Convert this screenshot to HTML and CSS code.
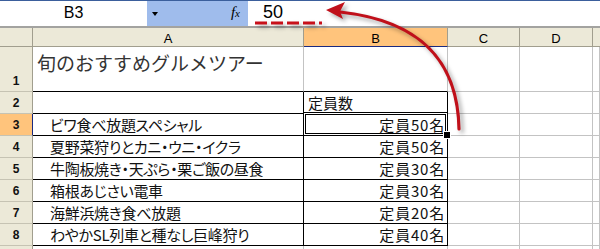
FILE: index.html
```html
<!DOCTYPE html>
<html lang="ja">
<head>
<meta charset="utf-8">
<link rel="stylesheet" href="styles.css">
</head>
<body>
<div class="app">
  <div class="fbar">
    <div class="namebox">B3</div>
    <div class="nbdrop"><span class="tri"></span><span class="fx"><i>f</i><span class="fxx">x</span></span></div>
    <div class="formula"><span class="fval">50</span></div>
  </div>
  <div class="sheet">
    <div class="corner"></div>
    <div class="ch">A</div>
    <div class="ch chsel">B</div>
    <div class="ch">C</div>
    <div class="ch">D</div>
    <div class="ch chlast"></div>

    <div class="rh">1</div>
    <div class="c tbot title">旬のおすすめグルメツアー</div>
    <div class="c tbot"></div>
    <div class="c"></div><div class="c"></div><div class="c"></div>

    <div class="rh">2</div>
    <div class="c tb"></div>
    <div class="c tb lbl">定員数</div>
    <div class="c"></div><div class="c"></div><div class="c"></div>

    <div class="rh rhsel">3</div>
    <div class="c tb item">ビワ食べ放題スペシャル</div>
    <div class="c tb num active">定員50名</div>
    <div class="c"></div><div class="c"></div><div class="c"></div>

    <div class="rh">4</div>
    <div class="c tb item">夏野菜狩りとカニ・ウニ・イクラ</div>
    <div class="c tb num">定員50名</div>
    <div class="c"></div><div class="c"></div><div class="c"></div>

    <div class="rh">5</div>
    <div class="c tb item">牛陶板焼き・天ぷら・栗ご飯の昼食</div>
    <div class="c tb num">定員30名</div>
    <div class="c"></div><div class="c"></div><div class="c"></div>

    <div class="rh">6</div>
    <div class="c tb item">箱根あじさい電車</div>
    <div class="c tb num">定員30名</div>
    <div class="c"></div><div class="c"></div><div class="c"></div>

    <div class="rh">7</div>
    <div class="c tb item">海鮮浜焼き食べ放題</div>
    <div class="c tb num">定員20名</div>
    <div class="c"></div><div class="c"></div><div class="c"></div>

    <div class="rh">8</div>
    <div class="c tb item">わやかSL列車と種なし巨峰狩り</div>
    <div class="c tb num">定員40名</div>
    <div class="c"></div><div class="c"></div><div class="c"></div>

    <div class="rh"></div>
    <div class="c"></div><div class="c"></div><div class="c"></div><div class="c"></div><div class="c"></div>
  </div>
  <svg class="annot" width="600" height="249" viewBox="0 0 600 249">
    <g class="shadowed">
      <line x1="255" y1="23" x2="322" y2="23" stroke="#C8101A" stroke-width="3" stroke-dasharray="12 4"/>
      <path d="M459 129 C 458 72, 432 22, 340 12" fill="none" stroke="#C0101A" stroke-width="3.2" stroke-linecap="round"/>
      <path d="M326 10 L345 2 L340 11.5 L343 19 Z" fill="#C0101A"/>
    </g>
  </svg>
</div>
</body>
</html>
```

FILE: styles.css
```css
* { box-sizing: border-box; }
html, body { margin: 0; padding: 0; background: #fff; }
body { width: 600px; height: 249px; overflow: hidden; font-family: "Liberation Sans", Arial, sans-serif; }
.app { position: relative; width: 600px; height: 249px; overflow: hidden; }

.fbar {
  display: flex;
  height: 28px;
  border-top: 1px solid #3B5F9C;
  border-bottom: 2px solid #A3A3A0;
}
.namebox {
  width: 147px;
  background: #fff;
  display: flex;
  align-items: center;
  justify-content: center;
  font-size: 16px;
  color: #000;
  padding-bottom: 2px;
}
.nbdrop {
  width: 101px;
  background: #9FBCEC;
  display: flex;
  align-items: center;
  justify-content: space-between;
  padding: 0 8px 2px 5px;
}
.tri {
  width: 0; height: 0;
  border-left: 3.5px solid transparent;
  border-right: 3.5px solid transparent;
  border-top: 4px solid #000;
  margin-top: 2px;
}
.fx {
  font-family: "Liberation Serif", serif;
  font-size: 15px;
  color: #000;
  line-height: 1;
}
.fx i { font-style: italic; }
.fxx { font-size: 11px; font-style: italic; }
.formula {
  flex: 1;
  background: #fff;
  display: flex;
  align-items: center;
  padding-left: 15px;
  padding-bottom: 3px;
}
.fval { font-size: 18px; color: #000; }

.sheet {
  display: grid;
  grid-template-columns: 33px 271px 144px 72px 73px 1fr;
  grid-template-rows: 19px 45px repeat(7, 22px) 1fr;
  height: 221px;
}
.corner, .ch, .rh {
  background: #ECE9D8;
  border-right: 1px solid #A19E8E;
  border-bottom: 1px solid #C6C3B3;
}
.corner { border-bottom-color: #A19E8E; }
.ch {
  font-size: 13px;
  color: #000;
  display: flex;
  align-items: center;
  justify-content: center;
  border-bottom-color: #A19E8E;
  padding-top: 2px;
}
.chsel { background: #FFC47C; border-bottom: 1px solid #1A2A80; }
.chlast { border-right: none; }
.rh {
  font-size: 12px;
  font-weight: bold;
  color: #111;
  display: flex;
  align-items: flex-end;
  justify-content: center;
  padding-bottom: 3px;
}
.rhsel { background: #FFC47C; border-right: 1px solid #1A2A80; }

.c {
  position: relative;
  border-right: 1px solid #C3C3C3;
  border-bottom: 1px solid #C3C3C3;
  font-family: "Noto Sans CJK JP", "Liberation Sans", sans-serif;
  color: #111;
  white-space: nowrap;
}
.tbot { border-bottom-color: #000; }
.tb { border-right-color: #000; border-bottom-color: #000; }

.title {
  font-size: 19px;
  color: #333;
  padding: 4px 0 0 4px;
  line-height: 24px;
}
.lbl, .item, .num {
  font-size: 15px;
  line-height: 20px;
  padding-top: 1px;
}
.lbl, .item { font-feature-settings: "palt"; }
.lbl { padding-left: 4px; }
.item { padding-left: 17px; letter-spacing: -0.3px; }
.num { text-align: right; padding-right: 2px; letter-spacing: 0.8px; }

.active::after {
  content: "";
  position: absolute;
  top: -2px; left: -1px; right: -1px; bottom: -1px;
  border: 1px solid #000;
  box-shadow: inset 0 0 0 1px #fff, inset 0 0 0 2px #000;
}
.active::before {
  content: "";
  position: absolute;
  right: -4px; bottom: -4px;
  width: 6px; height: 6px;
  background: #000;
  border: 1px solid #fff;
  z-index: 2;
}

.annot {
  position: absolute;
  left: 0; top: 0;
  pointer-events: none;
}
.shadowed { filter: drop-shadow(3px 3px 2px rgba(0,0,0,0.35)); }
```
